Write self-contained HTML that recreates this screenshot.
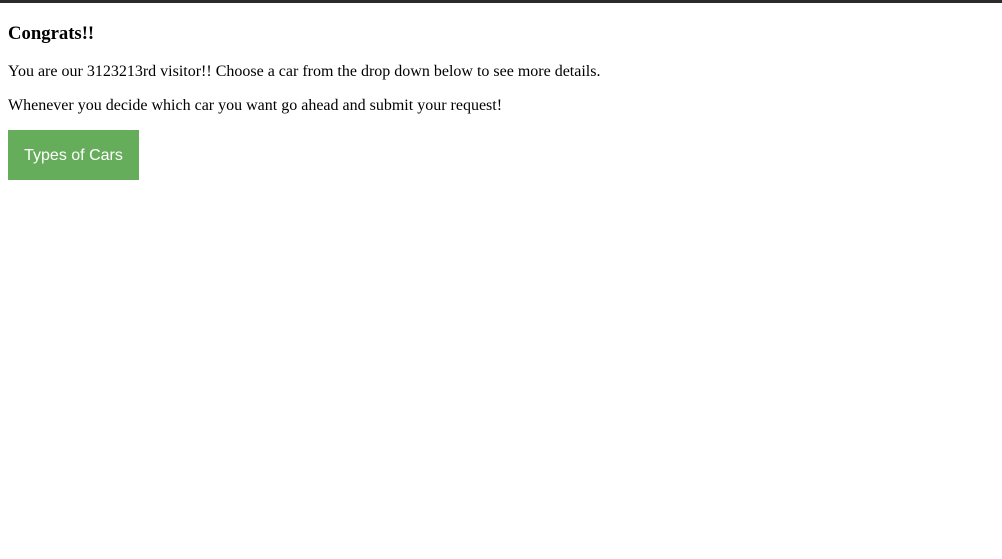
<!DOCTYPE html>
<html><head><meta charset="utf-8"><style>
html,body{margin:0;padding:0;background:#fff;width:1002px;height:559px;overflow:hidden}
.bar{position:absolute;left:0;top:0;width:1002px;height:3px;background:#2b2b2b}
.t{position:absolute;left:8px;font-family:"Liberation Serif",serif;color:#000;white-space:nowrap;margin:0}
h3.t{font-size:18.7px;font-weight:bold;top:23px}
p.t{font-size:16px}
.btn{position:absolute;left:8px;top:130px;width:131px;height:50px;background:#65ad5b;color:#fff;font-family:"Liberation Sans",sans-serif;font-size:16px;line-height:51px;text-align:center}
</style></head><body>
<div class="bar"></div>
<h3 class="t">Congrats!!</h3>
<p class="t" style="top:63px">You are our 3123213rd visitor!! Choose a car from the drop down below to see more details.</p>
<p class="t" style="top:97px">Whenever you decide which car you want go ahead and submit your request!</p>
<div class="btn">Types of Cars</div>
</body></html>
